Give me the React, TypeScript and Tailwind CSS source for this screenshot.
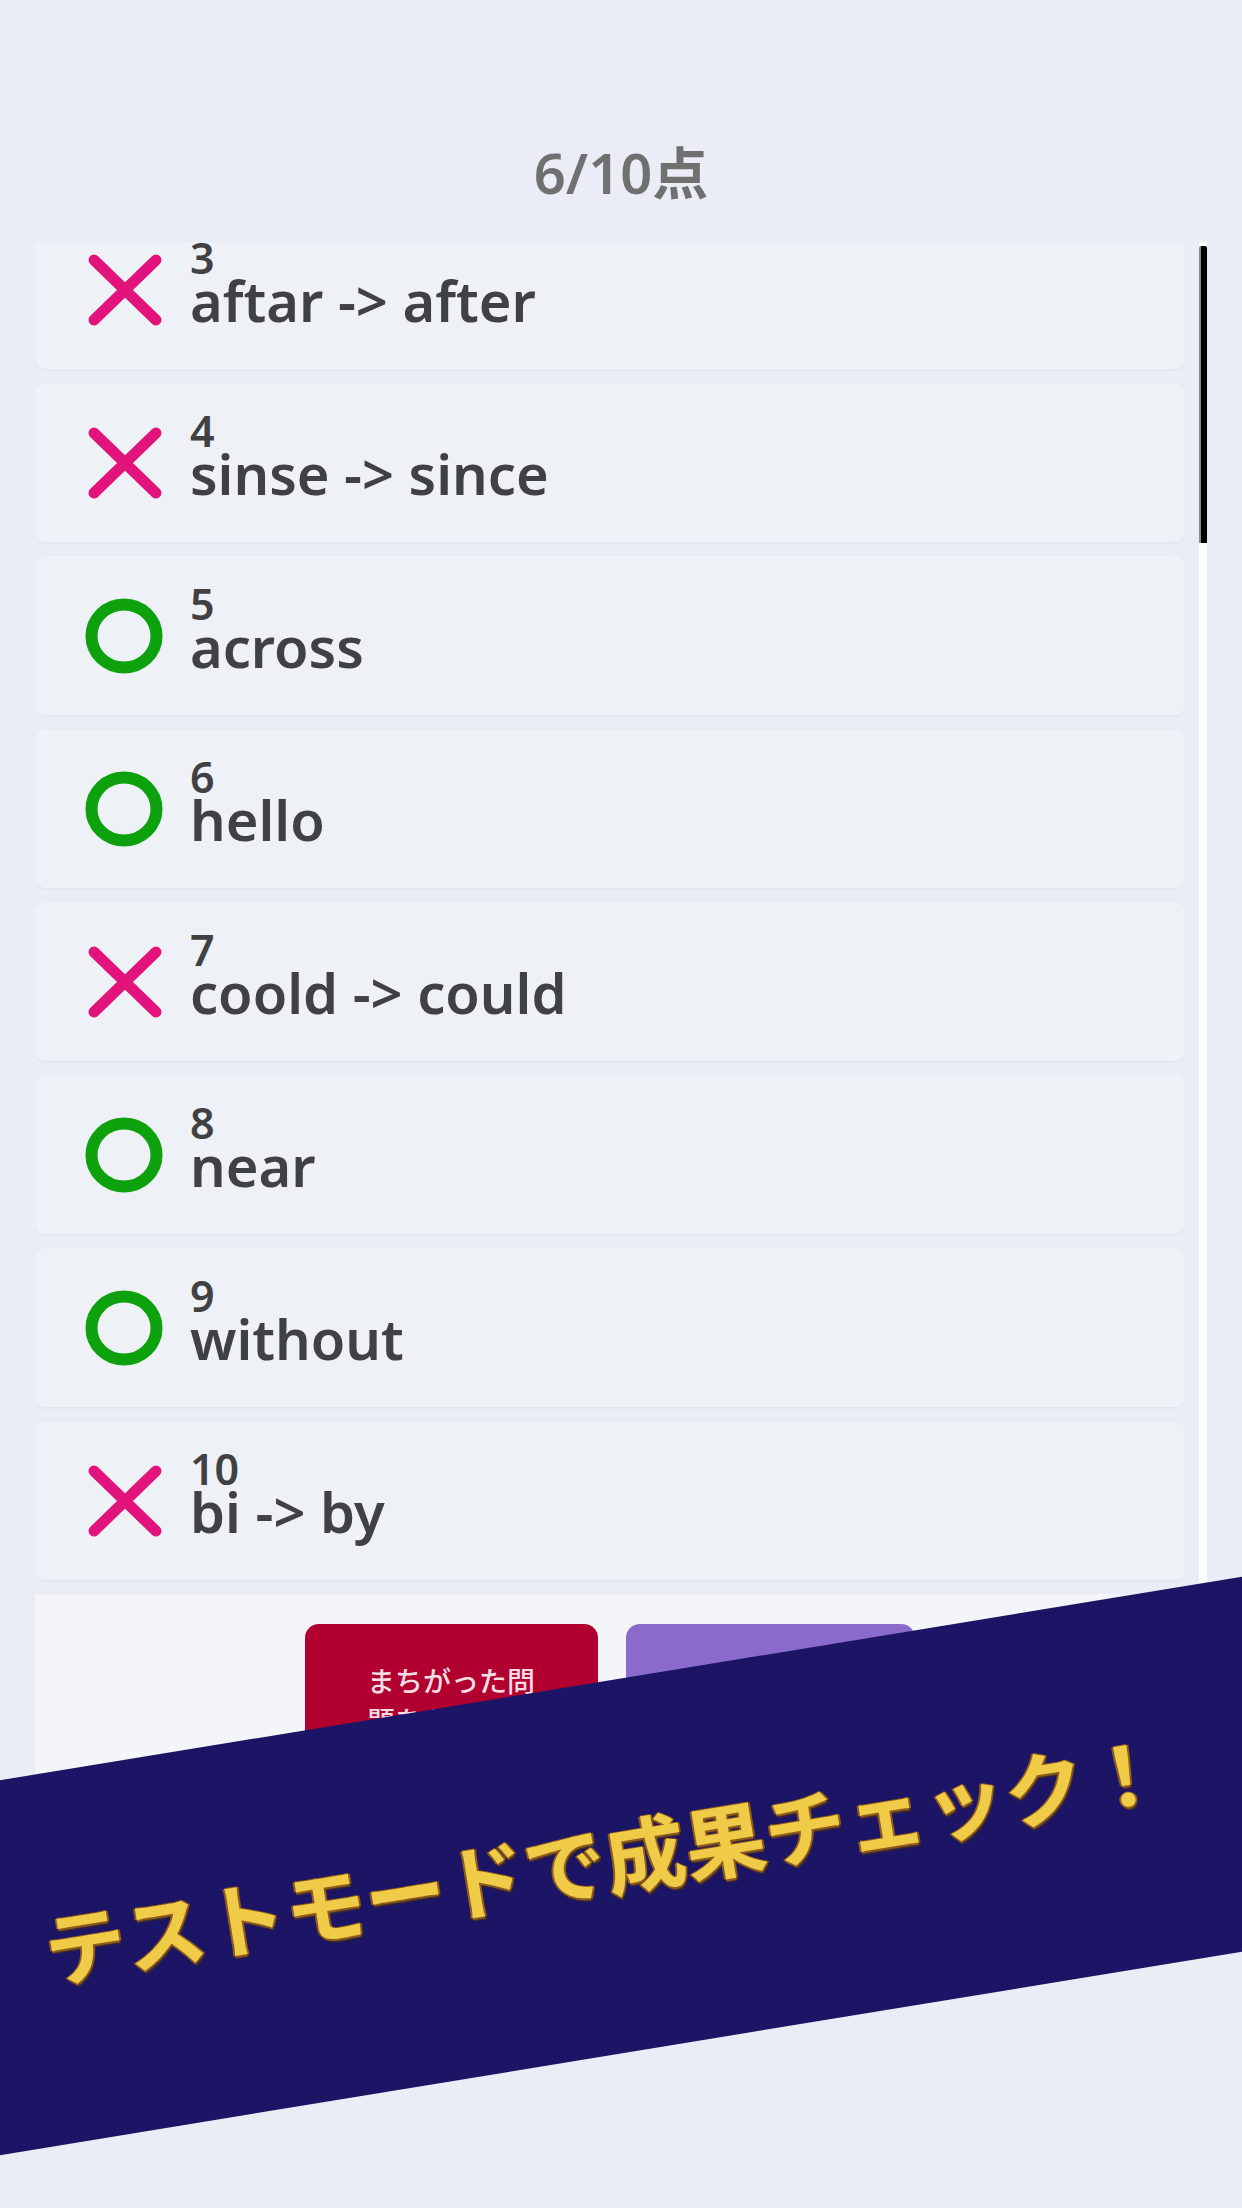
import React from 'react';

type Answer = {
  no: number;
  text: string;
  correct: boolean;
};

const answers: Answer[] = [
  { no: 3, text: 'aftar -> after', correct: false },
  { no: 4, text: 'sinse -> since', correct: false },
  { no: 5, text: 'across', correct: true },
  { no: 6, text: 'hello', correct: true },
  { no: 7, text: 'coold -> could', correct: false },
  { no: 8, text: 'near', correct: true },
  { no: 9, text: 'without', correct: true },
  { no: 10, text: 'bi -> by', correct: false },
];

const CrossMark = () => (
  <svg width="80" height="76" viewBox="0 0 80 76">
    <path d="M9 8 L71 68 M71 8 L9 68" stroke="#e2137b" strokeWidth="11" strokeLinecap="round" fill="none" />
  </svg>
);

const CircleMark = () => (
  <svg width="80" height="76" viewBox="0 0 80 76">
    <ellipse cx="39" cy="38" rx="32.5" ry="31.5" stroke="#0ea10e" strokeWidth="12" fill="none" />
  </svg>
);

const AnswerRow: React.FC<{ item: Answer }> = ({ item }) => (
  <li className="flex h-[159px] items-center rounded-[10px] bg-[#eef1f6] pl-[50px] shadow-[0_1px_3px_rgba(150,160,190,0.12)]">
    <div className="shrink-0">{item.correct ? <CircleMark /> : <CrossMark />}</div>
    <div className="ml-[25px] flex flex-col pb-[22px] text-[#404142]">
      <span className="text-[43px] leading-[43px] font-semibold">{item.no}</span>
      <span className="text-[56px] leading-[42px] font-semibold">{item.text}</span>
    </div>
  </li>
);

export default function App() {
  return (
    <div className="relative h-[2208px] w-full overflow-hidden bg-[#eaedf5] font-['Noto_Sans','Noto_Sans_CJK_JP',sans-serif]">
      <header className="h-[242px] pt-[144px] text-center">
        <h1 className="text-[56px] leading-[56px] font-semibold text-[#707070]">6/10点</h1>
      </header>

      <main className="ml-[35px] flex w-[1172px] gap-[14px]">
        <div className="h-[1660px] w-[1150px] overflow-hidden">
          <div className="-mt-[32px] flex flex-col gap-[14px]">
            <ul className="flex flex-col gap-[14px]">
              {answers.map(a => (
                <AnswerRow key={a.no} item={a} />
              ))}
            </ul>

            <div className="flex h-[300px] items-start justify-center gap-[28px] bg-[#f4f5f9] pt-[30px]">
              <button className="flex h-[190px] w-[293px] items-start rounded-[14px] bg-[#b1002f] px-[62px] pt-[36px] text-left font-['Noto_Sans_CJK_JP',sans-serif] text-[28px] leading-[40px] font-medium text-[#f6dce3]">
                まちがった問題をもう一度
              </button>
              <button className="flex h-[190px] w-[289px] items-start rounded-[14px] bg-[#8a6bcb] px-[56px] pt-[36px] text-left font-['Noto_Sans_CJK_JP',sans-serif] text-[28px] leading-[40px] font-medium text-[#ece6f8]">
                同じ問題をもう一度
              </button>
            </div>
          </div>
        </div>

        <div className="h-[1660px] w-[8px] bg-white">
          <div className="mt-[4px] h-[297px] w-[8px] rounded-t-[2px] border-l-2 border-[#8a8a8a] bg-black" />
        </div>
      </main>

      {/* diagonal promo banner over the page */}
      <div className="absolute left-[-129px] top-[1681px] flex h-[370px] w-[1500px] -rotate-[9.3deg] items-center justify-center bg-[#1c1464] pb-[26px] pr-[30px]">
        <p className="font-['Noto_Sans_CJK_JP',sans-serif] text-[81px] leading-none font-bold text-[#efcb48] [text-shadow:0_2px_0_#8d5b1c,0_-1px_0_#8d5b1c,2px_0_0_#8d5b1c,-2px_0_0_#8d5b1c,1px_3px_2px_#5a3a10]">
          テストモードで成果チェック！
        </p>
      </div>
    </div>
  );
}
